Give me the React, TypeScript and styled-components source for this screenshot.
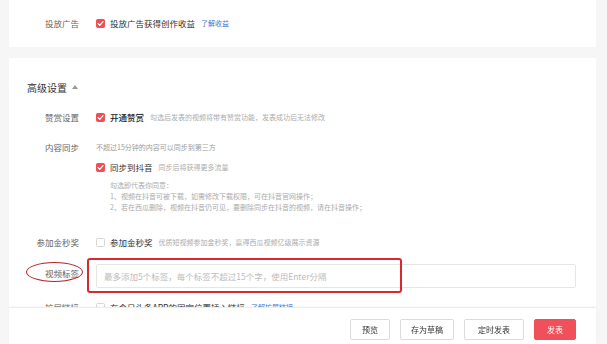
import React from 'react';
import styled, { createGlobalStyle } from 'styled-components';

const Global = createGlobalStyle`
  html, body {
    margin: 0;
    padding: 0;
    background: #f6f6f6;
    font-family: "Noto Sans CJK SC", "Noto Sans", "Liberation Sans", sans-serif;
    color: #333;
  }
  * { box-sizing: border-box; }
`;

const Page = styled.div`
  height: 344px;
  overflow: hidden;
  padding: 0 11px 0 9px;
`;

const Card = styled.section<{ $pt: number; $h?: number; $mt?: number }>`
  background: #fff;
  padding: ${p => p.$pt}px 20px 0 18px;
  margin-top: ${p => p.$mt ?? 0}px;
  height: ${p => (p.$h ? `${p.$h}px` : 'auto')};
  min-height: ${p => (p.$h ? 0 : 400)}px;
`;

const Heading = styled.div`
  display: flex;
  align-items: center;
  gap: 5px;
  height: 20px;
  font-size: 10px;
  color: #333;
`;

const Caret = styled.span`
  width: 0;
  height: 0;
  border-left: 3px solid transparent;
  border-right: 3px solid transparent;
  border-bottom: 4px solid #999;
`;

const Row = styled.div<{ $mt?: number }>`
  position: relative;
  display: flex;
  align-items: flex-start;
  margin-top: ${p => p.$mt ?? 0}px;
`;

const Label = styled.div<{ $lh?: number }>`
  flex: none;
  width: 52px;
  margin-right: 17px;
  text-align: right;
  white-space: nowrap;
  font-size: 8.5px;
  line-height: ${p => p.$lh ?? 20}px;
  color: #666;
`;

const Content = styled.div`
  flex: 1;
  display: flex;
  flex-direction: column;
`;

const Line = styled.div`
  display: flex;
  align-items: center;
  height: 20px;
  white-space: nowrap;
`;

const Box = styled.span<{ $on?: boolean }>`
  flex: none;
  width: 9px;
  height: 9px;
  margin-right: 5px;
  border-radius: 1.5px;
  display: flex;
  align-items: center;
  justify-content: center;
  background: ${p => (p.$on ? '#ef4f53' : '#fff')};
  border: 1px solid ${p => (p.$on ? '#ef4f53' : '#d6d6d6')};
`;

const Text = styled.span<{ $strong?: boolean }>`
  font-size: 8.5px;
  color: ${p => (p.$strong ? '#222' : '#333')};
  font-weight: ${p => (p.$strong ? 500 : 400)};
`;

const Hint = styled.span`
  margin-left: 6px;
  font-size: 7px;
  color: #acacac;
`;

const Link = styled.span`
  margin-left: 6px;
  font-size: 7px;
  color: #3b78d8;
`;

const Plain = styled.span`
  font-size: 7px;
  color: #9c9c9c;
`;

const Notes = styled.div`
  margin: 3px 0 0 14px;
  font-size: 7px;
  line-height: 11px;
  color: #ababab;
  white-space: nowrap;
`;

const InputWrap = styled.div`
  position: relative;
  flex: 1;
`;

const TagInput = styled.input`
  display: block;
  width: 100%;
  height: 24px;
  padding: 0 7px;
  border: 1px solid #e6e6e6;
  border-radius: 2px;
  font-family: inherit;
  font-size: 8.5px;
  outline: none;
  &::placeholder { color: #bcbcbc; }
`;

const RedRect = styled.div`
  position: absolute;
  left: -9px;
  top: -6px;
  width: 315px;
  height: 35px;
  border: 2px solid #d8292f;
  border-radius: 3px;
  pointer-events: none;
`;

const RedEllipse = styled.div`
  position: absolute;
  left: -1px;
  top: -2px;
  width: 57px;
  height: 20px;
  border: 1.6px solid #b0242a;
  border-radius: 50%;
  pointer-events: none;
`;

const Footer = styled.footer`
  position: fixed;
  left: 9px;
  right: 11px;
  bottom: 0;
  height: 37px;
  background: #fff;
  border-top: 1px solid #ececec;
  box-shadow: 0 -1px 3px rgba(0, 0, 0, 0.03);
  display: flex;
  justify-content: flex-end;
  align-items: flex-start;
  gap: 10px;
  padding: 11px 20px 0 0;
`;

const Button = styled.button<{ $w: number; $primary?: boolean }>`
  width: ${p => p.$w}px;
  height: 21px;
  padding: 0;
  border-radius: 2px;
  font-family: inherit;
  font-size: 8px;
  border: 1px solid ${p => (p.$primary ? '#f0505a' : '#dcdcdc')};
  background: ${p => (p.$primary ? '#f0505a' : '#fff')};
  color: ${p => (p.$primary ? '#fff' : '#333')};
`;

function Check({ on }: { on?: boolean }) {
  return (
    <Box $on={on}>
      {on && (
        <svg width="7" height="7" viewBox="0 0 10 10">
          <path d="M1.5 5.2 L4 7.6 L8.6 2.4" fill="none" stroke="#fff" strokeWidth="1.8" strokeLinecap="round" strokeLinejoin="round" />
        </svg>
      )}
    </Box>
  );
}

export default function App() {
  return (
    <Page>
      <Global />
      <Card $pt={13} $h={47}>
        <Row>
          <Label>投放广告</Label>
          <Content>
            <Line>
              <Check on />
              <Text>投放广告获得创作收益</Text>
              <Link>了解收益</Link>
            </Line>
          </Content>
        </Row>
      </Card>

      <Card $pt={19} $mt={11}>
        <Heading>
          高级设置 <Caret />
        </Heading>

        <Row $mt={10}>
          <Label>赞赏设置</Label>
          <Content>
            <Line>
              <Check on />
              <Text $strong>开通赞赏</Text>
              <Hint>勾选后发表的视频将带有赞赏功能，发表成功后无法修改</Hint>
            </Line>
          </Content>
        </Row>

        <Row $mt={10}>
          <Label>内容同步</Label>
          <Content>
            <Line>
              <Plain>不超过15分钟的内容可以同步到第三方</Plain>
            </Line>
            <Line>
              <Check on />
              <Text>同步到抖音</Text>
              <Hint>同步后将获得更多流量</Hint>
            </Line>
            <Notes>
              勾选即代表你同意：
              <br />
              1、视频在抖音可被下载，如需修改下载权限，可在抖音官网操作；
              <br />
              2、若在西瓜删除，视频在抖音仍可见，要删除同步在抖音的视频，请在抖音操作；
            </Notes>
          </Content>
        </Row>

        <Row $mt={19}>
          <Label>参加金秒奖</Label>
          <Content>
            <Line>
              <Check />
              <Text>参加金秒奖</Text>
              <Hint>优质短视频参加金秒奖，赢得西瓜视频亿级展示资源</Hint>
            </Line>
          </Content>
        </Row>

        <Row $mt={12}>
          <RedEllipse />
          <Label $lh={18}>视频标签</Label>
          <InputWrap>
            <TagInput placeholder="最多添加5个标签，每个标签不超过15个字，使用Enter分隔" />
            <RedRect />
          </InputWrap>
        </Row>

        <Row $mt={9}>
          <Label>扩展链接</Label>
          <Content>
            <Line>
              <Check />
              <Text>在今日头条APP的固定位置插入链接</Text>
              <Link>了解扩展链接</Link>
            </Line>
          </Content>
        </Row>
      </Card>

      <Footer>
        <Button $w={40}>预览</Button>
        <Button $w={54}>存为草稿</Button>
        <Button $w={60}>定时发表</Button>
        <Button $w={42} $primary>发表</Button>
      </Footer>
    </Page>
  );
}
